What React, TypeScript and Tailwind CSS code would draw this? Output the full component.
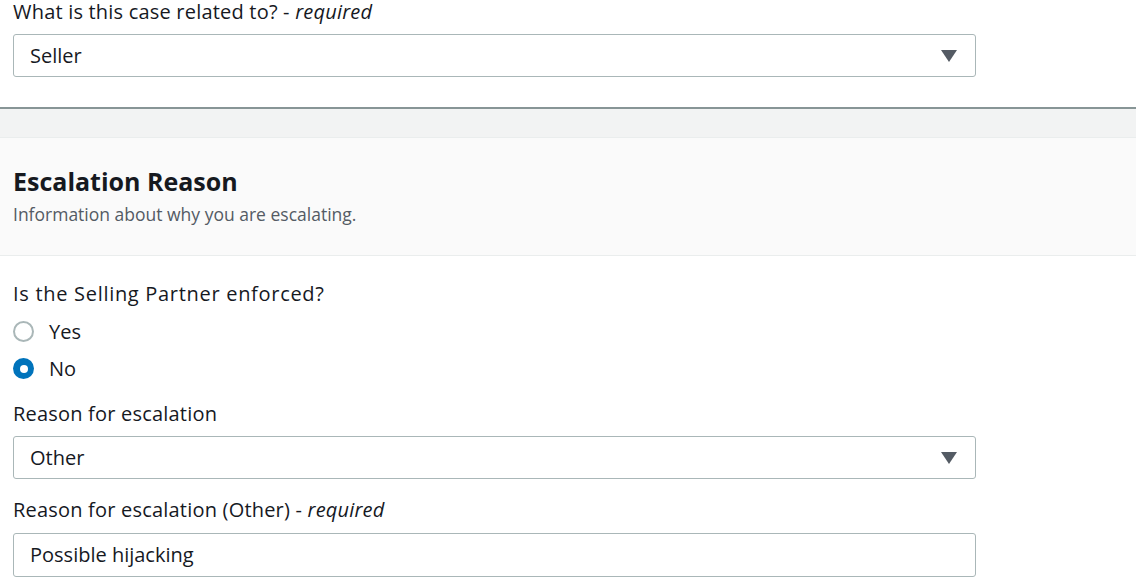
import { ReactNode } from 'react';

const font = { fontFamily: '"Open Sans", "Liberation Sans", sans-serif' };

function Caret() {
  return (
    <svg width="16" height="12" viewBox="0 0 16 12" className="shrink-0">
      <path d="M0 0h16L8 12z" fill="#545b64" />
    </svg>
  );
}

function Label({ children, required }: { children: ReactNode; required?: boolean }) {
  return (
    <div className="text-[20px] leading-[24px] tracking-[0.2px] text-[#16191f]">
      {children}
      {required && (
        <>
          {' - '}
          <i>required</i>
        </>
      )}
    </div>
  );
}

function SelectBox({ value }: { value: string }) {
  return (
    <div className="w-[963px] h-[43px] border border-[#aab7b8] rounded-[3px] bg-white flex items-center justify-between pl-[16px] pr-[18px]">
      <span className="text-[20px] text-[#16191f]">{value}</span>
      <Caret />
    </div>
  );
}

function Radio({ label, checked }: { label: string; checked?: boolean }) {
  return (
    <div className="flex items-center gap-[15px] h-[37px]">
      {checked ? (
        <span className="w-[21px] h-[21px] rounded-full bg-[#0073bb] flex items-center justify-center">
          <span className="w-[8px] h-[8px] rounded-full bg-white" />
        </span>
      ) : (
        <span className="w-[21px] h-[21px] rounded-full border-2 border-[#aab7b8] bg-white" />
      )}
      <span className="text-[20px] text-[#16191f]">{label}</span>
    </div>
  );
}

export default function App() {
  return (
    <div className="w-[1136px] h-[579px] overflow-hidden bg-white" style={font}>
      <div className="px-[13px] pt-0 pb-[30px]">
        <Label required>What is this case related to?</Label>
        <div className="mt-[10px]">
          <SelectBox value="Seller" />
        </div>
      </div>

      <div className="border-t-2 border-[#879596] h-[30px] bg-[#f2f3f3]" />

      <div className="border-t border-b border-[#eaeded] bg-[#fafafa] px-[13px] pt-[28px] h-[119px]">
        <h2 className="text-[25px] leading-[30px] font-bold text-[#16191f]">Escalation Reason</h2>
        <p className="mt-[8px] text-[17.5px] leading-[20px] text-[#545b64]">
          Information about why you are escalating.
        </p>
      </div>

      <div className="px-[13px] pt-[26px]">
        <Label>
          <span className="tracking-[0.7px]">Is the Selling Partner enforced?</span>
        </Label>
        <div className="mt-[7px]">
          <Radio label="Yes" />
          <Radio label="No" checked />
        </div>
        <div className="mt-[15px]">
          <Label>Reason for escalation</Label>
        </div>
        <div className="mt-[10px]">
          <SelectBox value="Other" />
        </div>
        <div className="mt-[19px]">
          <Label required>Reason for escalation (Other)</Label>
        </div>
        <div className="mt-[11px] w-[963px] h-[44px] border border-[#aab7b8] rounded-[3px] bg-white flex items-center pl-[16px]">
          <span className="text-[20px] text-[#16191f]">Possible hijacking</span>
        </div>
      </div>
    </div>
  );
}
